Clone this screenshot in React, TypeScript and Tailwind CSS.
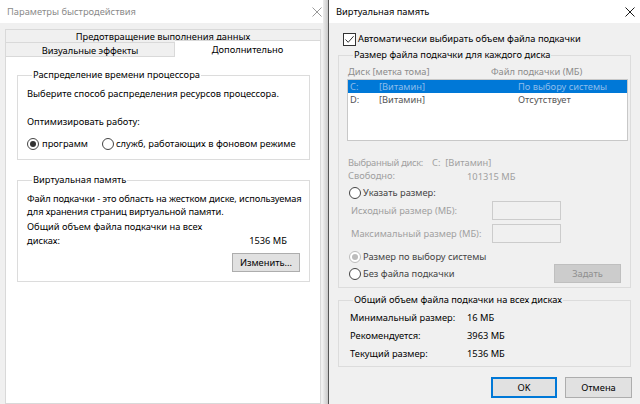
import React from 'react';

function CloseIcon({ color }: { color: string }) {
  return (
    <svg width="10" height="10" viewBox="0 0 10 10">
      <path d="M0.5 0.5 L9.5 9.5 M9.5 0.5 L0.5 9.5" stroke={color} strokeWidth="1" fill="none" />
    </svg>
  );
}

function Radio({ checked, disabled }: { checked?: boolean; disabled?: boolean }) {
  return (
    <span
      className={
        'w-[12px] h-[12px] rounded-full border bg-white flex items-center justify-center shrink-0 ' +
        (disabled ? 'border-[#bcbcbc]' : 'border-[#444444]')
      }
    >
      {checked && (
        <span className={'w-[6px] h-[6px] rounded-full ' + (disabled ? 'bg-[#bcbcbc]' : 'bg-[#333333]')} />
      )}
    </span>
  );
}

function CheckBox() {
  return (
    <span className="w-[13px] h-[13px] border border-[#333333] bg-white flex items-center justify-center shrink-0">
      <svg width="11" height="11" viewBox="0 0 11 11">
        <path d="M1.5 5.5 L4.2 8.3 L9.6 2.2" stroke="#333333" strokeWidth="1" fill="none" />
      </svg>
    </span>
  );
}

function PerformanceWindow() {
  return (
    <div className="w-[323px] flex flex-col bg-[#f0f0f0]">
      <div className="h-[23px] bg-white flex items-center justify-between pl-[7px] pr-[1px]">
        <span className="text-[#8a8a8a]">Параметры быстродействия</span>
        <CloseIcon color="#9a9a9a" />
      </div>

      <div className="flex-1 flex flex-col pl-[5px] pr-[2px] pt-[6px]">
        {/* tabs */}
        <div className="h-[13px] border border-b-0 border-[#d9d9d9] flex items-center justify-center leading-[13px]">
          Предотвращение выполнения данных
        </div>
        <div className="h-[15px] flex">
          <div className="w-[170px] border border-[#d9d9d9] flex items-center justify-center leading-[13px] pt-[1px]">
            Визуальные эффекты
          </div>
          <div className="flex-1 h-[17px] -mt-[2px] bg-white border border-b-0 border-l-0 border-[#d9d9d9] flex items-center justify-center leading-[13px]">
            Дополнительно
          </div>
        </div>

        {/* panel */}
        <div className="flex-1 bg-white border border-t-0 border-[#d9d9d9] pl-[11px] pr-[10px] pt-[10px]">
          <fieldset className="min-w-0 border border-[#dcdcdc] px-[9px] pb-[7px]">
            <legend className="ml-[5px] px-[1px] leading-[16px]">Распределение времени процессора</legend>
            <div className="mt-[3px] leading-[16px]">Выберите способ распределения ресурсов процессора.</div>
            <div className="mt-[12px] leading-[16px]">Оптимизировать работу:</div>
            <div className="mt-[6px] h-[16px] flex items-center">
              <Radio checked />
              <span className="ml-[3px]">программ</span>
              <span className="ml-[14px] flex items-center">
                <Radio />
                <span className="ml-[2px]">служб, работающих в фоновом режиме</span>
              </span>
            </div>
          </fieldset>

          <fieldset className="min-w-0 mt-[12px] border border-[#dcdcdc] px-[9px] pb-[9px]">
            <legend className="ml-[5px] px-[1px] leading-[16px]">Виртуальная память</legend>
            <div className="mt-[4px] leading-[13px] whitespace-nowrap tracking-[-0.1px]">
              Файл подкачки - это область на жестком диске, используемая
              <br />
              для хранения страниц виртуальной памяти.
            </div>
            <div className="mt-[2px] flex items-end leading-[14px]">
              <div className="flex-1 whitespace-nowrap">
                Общий объем файла подкачки на всех
                <br />
                дисках:
              </div>
              <div className="mr-[13px]">1536 МБ</div>
            </div>
            <div className="mt-[5px] flex justify-end">
              <button className="w-[68px] h-[19px] bg-[#e1e1e1] border border-[#adadad] leading-[16px]">
                Изменить...
              </button>
            </div>
          </fieldset>
        </div>
      </div>
    </div>
  );
}

function VirtualMemoryWindow() {
  return (
    <div className="flex-1 flex flex-col bg-[#f0f0f0]">
      <div className="h-[23px] bg-white flex items-center justify-between pl-[7px] pr-[5px]">
        <span>Виртуальная память</span>
        <CloseIcon color="#1a1a1a" />
      </div>

      <div className="flex-1 flex flex-col px-[9px]">
        <div className="mt-[8px] h-[16px] flex items-center pl-[5px]">
          <CheckBox />
          <span className="ml-[2px]">Автоматически выбирать объем файла подкачки</span>
        </div>

        <fieldset className="min-w-0 border border-[#dcdcdc] pl-[9px] pr-[2px] pb-[4px]">
          <legend className="ml-[5px] px-[1px] leading-[16px]">Размер файла подкачки для каждого диска</legend>
          <div className="mt-[2px] h-[14px] flex items-center text-[#8c8c8c]">
            <span className="w-[143px]">Диск [метка тома]</span>
            <span>Файл подкачки (МБ)</span>
          </div>
          <div className="-ml-[1px] h-[62px] bg-white border border-[#c8c8c8]">
            <div className="h-[13px] bg-[#0078d7] text-[#8dbdec] flex items-center pl-[2px] leading-[13px]">
              <span className="w-[29px]">C:</span>
              <span className="w-[139px]">[Витамин]</span>
              <span>По выбору системы</span>
            </div>
            <div className="h-[13px] text-[#555555] flex items-center pl-[2px] leading-[13px]">
              <span className="w-[29px]">D:</span>
              <span className="w-[139px]">[Витамин]</span>
              <span>Отсутствует</span>
            </div>
          </div>

          <div className="mt-[15px] h-[13px] flex items-center text-[#a0a0a0] whitespace-nowrap">
            <span className="tracking-[-0.3px]">Выбранный диск:</span>
            <span className="ml-[9px]">C:&nbsp;&nbsp;[Витамин]</span>
          </div>
          <div className="h-[14px] flex items-center text-[#a0a0a0] whitespace-nowrap">
            <span className="w-[119px] shrink-0">Свободно:</span>
            <span className="mt-[2px]">101315 МБ</span>
          </div>

          <div className="mt-[2px] h-[16px] flex items-center pl-[1px] text-[#444444]">
            <Radio />
            <span className="ml-[2px]">Указать размер:</span>
          </div>
          <div className="h-[19px] flex items-center pl-[3px] text-[#a0a0a0] whitespace-nowrap">
            <span className="w-[141px] shrink-0">Исходный размер (МБ):</span>
            <span className="w-[69px] h-[19px] border border-[#cccccc]" />
          </div>
          <div className="mt-[4px] h-[19px] flex items-center pl-[3px] text-[#a0a0a0] whitespace-nowrap">
            <span className="w-[141px] shrink-0">Максимальный размер (МБ):</span>
            <span className="w-[69px] h-[19px] border border-[#cccccc]" />
          </div>

          <div className="mt-[6px] h-[15px] flex items-center pl-[1px] text-[#444444]">
            <Radio checked disabled />
            <span className="ml-[2px]">Размер по выбору системы</span>
          </div>
          <div className="h-[19px] flex items-center justify-between pl-[1px] pr-[7px] text-[#444444]">
            <span className="flex items-center">
              <Radio />
              <span className="ml-[2px]">Без файла подкачки</span>
            </span>
            <button className="w-[67px] h-[19px] bg-[#cccccc] border border-[#bfbfbf] text-[#8f8f8f] leading-[16px]">
              Задать
            </button>
          </div>
        </fieldset>

        <fieldset className="min-w-0 mt-[4px] border border-[#dcdcdc] pl-[11px] pb-[3px]">
          <legend className="ml-[3px] px-[1px] leading-[16px]">Общий объем файла подкачки на всех дисках</legend>
          <div className="mt-[1px] h-[18px] flex items-center">
            <span className="w-[117px]">Минимальный размер:</span>
            <span>16 МБ</span>
          </div>
          <div className="h-[18px] flex items-center">
            <span className="w-[117px]">Рекомендуется:</span>
            <span>3963 МБ</span>
          </div>
          <div className="h-[18px] flex items-center">
            <span className="w-[117px]">Текущий размер:</span>
            <span>1536 МБ</span>
          </div>
        </fieldset>

        <div className="mt-[10px] flex justify-end gap-[8px] -mr-[1px]">
          <button className="w-[66px] h-[21px] bg-[#e1e1e1] border-2 border-[#0078d7] leading-[16px]">OK</button>
          <button className="w-[67px] h-[21px] bg-[#e1e1e1] border border-[#adadad] leading-[16px]">Отмена</button>
        </div>
      </div>
    </div>
  );
}

export default function App() {
  return (
    <div className="w-[640px] h-[404px] overflow-hidden flex font-['Noto_Sans',sans-serif] text-[9.3px] text-black bg-[#f0f0f0]">
      <PerformanceWindow />
      <div className="w-[5px] bg-gradient-to-r from-[#ececec] to-[#c9c9c9]" />
      <div className="w-px bg-[#555555]" />
      <VirtualMemoryWindow />
    </div>
  );
}
